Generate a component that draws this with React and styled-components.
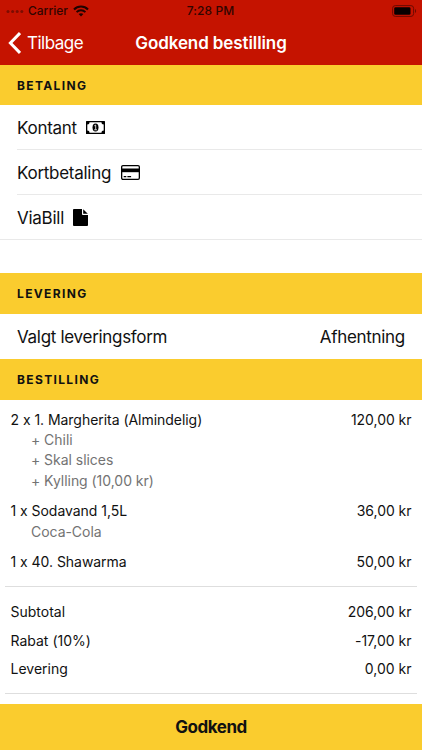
import React from "react";
import styled, { createGlobalStyle } from "styled-components";

const GlobalStyle = createGlobalStyle`
  * {
    box-sizing: border-box;
  }

  body {
    margin: 0;
    background: #fff;
    font-family: Inter, "Liberation Sans", sans-serif;
    font-feature-settings: "calt" 0;
    color: #111;
  }
`;

const Screen = styled.div`
  display: flex;
  flex-direction: column;
  width: 422px;
  height: 750px;
  overflow: hidden;
  background: #fff;
`;

const Header = styled.header`
  flex: none;
  height: 65px;
  background: #c51300;
`;

const StatusBar = styled.div`
  display: grid;
  grid-template-columns: 1fr auto 1fr;
  align-items: center;
  height: 21px;
  padding: 0 5px 0 6px;
  font-size: 12px;
  font-weight: 500;
  line-height: 21px;
  color: #300500;
`;

const Carrier = styled.div`
  display: flex;
  align-items: center;

  span {
    margin: 0 5px 0 4px;
    letter-spacing: 0;
  }
`;

const Time = styled.div`
  margin-right: 2px;
  letter-spacing: 0.1px;
`;

const Battery = styled.svg`
  justify-self: end;
`;

const NavBar = styled.nav`
  display: grid;
  grid-template-columns: 1fr auto 1fr;
  align-items: center;
  height: 44px;
  padding: 0 8px;
  color: #fff;
`;

const BackButton = styled.button`
  display: flex;
  align-items: center;
  gap: 6px;
  padding: 0;
  border: 0;
  background: none;
  color: #fff;
  font: 400 17px Inter, sans-serif;
  letter-spacing: -0.5px;
`;

const Title = styled.h1`
  margin: 0;
  font-size: 17px;
  font-weight: 600;
  letter-spacing: -0.1px;
`;

const SectionTitle = styled.h2`
  flex: none;
  height: ${(props) => props.$height}px;
  margin: 0;
  padding-left: 17px;
  background: #facc2e;
  font-size: 12px;
  font-weight: 700;
  line-height: 41px;
  letter-spacing: 1.35px;
  text-transform: uppercase;
`;

const PaymentList = styled.div`
  flex: none;
  height: 168px;
`;

const Row = styled.div`
  display: flex;
  flex: none;
  align-items: center;
  height: 45px;
  margin-left: ${(props) => (props.$last ? 0 : 17)}px;
  padding-top: 1px;
  padding-left: ${(props) => (props.$last ? 17 : 0)}px;
  border-bottom: 1px solid #e9e9e9;
  font-size: 17px;
  letter-spacing: -0.27px;

  svg {
    margin-left: 9.5px;
  }
`;

const DeliveryRow = styled.div`
  display: flex;
  flex: none;
  align-items: center;
  justify-content: space-between;
  height: 45px;
  padding: 0 17px;
  font-size: 17px;
  letter-spacing: -0.3px;
`;

const Order = styled.div`
  flex: 1;
  padding: 9.6px 5px 0;
  font-size: 14px;
  line-height: 20.4px;
`;

const OrderItem = styled.div`
  display: flex;
  justify-content: space-between;
  margin-bottom: 10px;
  padding: 0 5.5px;
  letter-spacing: -0.04px;
`;

const Extra = styled.div`
  padding-left: 20.5px;
  color: #737373;
`;

const Totals = styled.div`
  height: 108px;
  margin-top: 13.8px;
  padding: 10.8px 5.5px 0;
  border-top: 1px solid #dedede;
  border-bottom: 1px solid #dedede;
  line-height: 28.6px;
`;

const TotalRow = styled.div`
  display: flex;
  justify-content: space-between;
`;

const ConfirmButton = styled.button`
  flex: none;
  height: 46px;
  padding: 0;
  border: 0;
  background: #facc2e;
  color: #111;
  font: 700 17px Inter, sans-serif;
  letter-spacing: -0.45px;
`;

const SignalDots = () => (
  <svg width="18" height="4" viewBox="0 0 18 4" fill="#7c0c00">
    <circle cx="2" cy="2.5" r="1.5" />
    <circle cx="6.6" cy="2.5" r="1.5" />
    <circle cx="11.2" cy="2.5" r="1.5" />
    <circle cx="15.8" cy="2.5" r="1.5" />
  </svg>
);

const WifiIcon = () => (
  <svg width="16" height="12" viewBox="0 0 16 12" fill="none" stroke="#210300">
    <path d="M1 4.4C4.8 .6 11.2 .6 15 4.4" strokeWidth="2.1" />
    <path d="M3.6 7.1C6 4.7 10 4.7 12.4 7.1" strokeWidth="2" />
    <path d="M8 11.5 5.6 9.1C7 7.8 9 7.8 10.4 9.1Z" fill="#210300" stroke="none" />
  </svg>
);

const BatteryIcon = () => (
  <Battery width="25" height="12" viewBox="0 0 25 12">
    <rect x=".6" y=".6" width="21" height="10.8" rx="2.7" fill="none" stroke="#6c0a00" />
    <rect x="2.2" y="2.2" width="16.3" height="7.6" rx="1.3" fill="#080000" />
    <path d="M23 4v4c1.5-.5 1.5-3.5 0-4Z" fill="#6c0a00" />
  </Battery>
);

const BackIcon = () => (
  <svg width="13" height="22" viewBox="0 0 13 22" fill="none" stroke="#fff" strokeWidth="3">
    <path d="M12 1.1 2.4 11l9.6 9.9" />
  </svg>
);

const CashIcon = () => (
  <svg width="19" height="13" viewBox="0 0 19 13" fill="#000">
    <path
      fillRule="evenodd"
      d="M.6 0h17.8q.6 0 .6.6v11.8q0 .6-.6.6H.6q-.6 0-.6-.6V.6Q0 0 .6 0ZM3.6 1.3A2.3 2.3 0 0 1 1.3 3.6v5.8A2.3 2.3 0 0 1 3.6 11.7h11.8A2.3 2.3 0 0 1 17.7 9.4V3.6A2.3 2.3 0 0 1 15.4 1.3Z"
    />
    <ellipse cx="9.5" cy="6.5" rx="3" ry="4" />
    <path d="M8.3 4.8 9.7 4v4.6M8.2 8.8h2.8" fill="none" stroke="#fff" strokeWidth=".8" />
  </svg>
);

const CardIcon = () => (
  <svg width="19" height="15" viewBox="0 0 19 15">
    <rect x=".65" y=".65" width="17.7" height="13.7" rx="1.3" fill="#fff" stroke="#000" strokeWidth="1.3" />
    <path d="M.6 3.5h17.8v3.7H.6Z" />
    <path d="M2.7 11.6h2.6M6.4 11.6h3.7" stroke="#000" strokeWidth="1.2" />
  </svg>
);

const FileIcon = () => (
  <svg width="15" height="17" viewBox="0 0 15 17" fill="#000">
    <path d="M.9 0H9v5.1q0 .9.9.9H15v10.1q0 .9-.9.9H.9q-.9 0-.9-.9V.9Q0 0 .9 0Z" />
    <path d="M10.2.2 14.8 4.8h-4.6Z" />
  </svg>
);

const items = [
  {
    name: "2 x 1. Margherita (Almindelig)",
    extras: ["+ Chili", "+ Skal slices", "+ Kylling (10,00 kr)"],
    price: "120,00 kr",
  },
  { name: "1 x Sodavand 1,5L", extras: ["Coca-Cola"], price: "36,00 kr" },
  { name: "1 x 40. Shawarma", extras: [], price: "50,00 kr" },
];

const totals = [
  ["Subtotal", "206,00 kr"],
  ["Rabat (10%)", "-17,00 kr"],
  ["Levering", "0,00 kr"],
];

function App() {
  return (
    <>
      <GlobalStyle />
      <Screen>
        <Header>
          <StatusBar>
            <Carrier>
              <SignalDots />
              <span>Carrier</span>
              <WifiIcon />
            </Carrier>
            <Time>7:28 PM</Time>
            <BatteryIcon />
          </StatusBar>
          <NavBar>
            <BackButton>
              <BackIcon />
              Tilbage
            </BackButton>
            <Title>Godkend bestilling</Title>
          </NavBar>
        </Header>

        <SectionTitle $height={40}>Betaling</SectionTitle>
        <PaymentList>
          <Row>
            Kontant
            <CashIcon />
          </Row>
          <Row>
            Kortbetaling
            <CardIcon />
          </Row>
          <Row $last>
            ViaBill
            <FileIcon />
          </Row>
        </PaymentList>

        <SectionTitle $height={41}>Levering</SectionTitle>
        <DeliveryRow>
          <span>Valgt leveringsform</span>
          <span>Afhentning</span>
        </DeliveryRow>

        <SectionTitle $height={41}>Bestilling</SectionTitle>
        <Order>
          {items.map((item) => (
            <OrderItem key={item.name}>
              <div>
                {item.name}
                {item.extras.map((extra) => (
                  <Extra key={extra}>{extra}</Extra>
                ))}
              </div>
              <span>{item.price}</span>
            </OrderItem>
          ))}
          <Totals>
            {totals.map(([label, amount]) => (
              <TotalRow key={label}>
                <span>{label}</span>
                <span>{amount}</span>
              </TotalRow>
            ))}
          </Totals>
        </Order>

        <ConfirmButton>Godkend</ConfirmButton>
      </Screen>
    </>
  );
}

export default App;
